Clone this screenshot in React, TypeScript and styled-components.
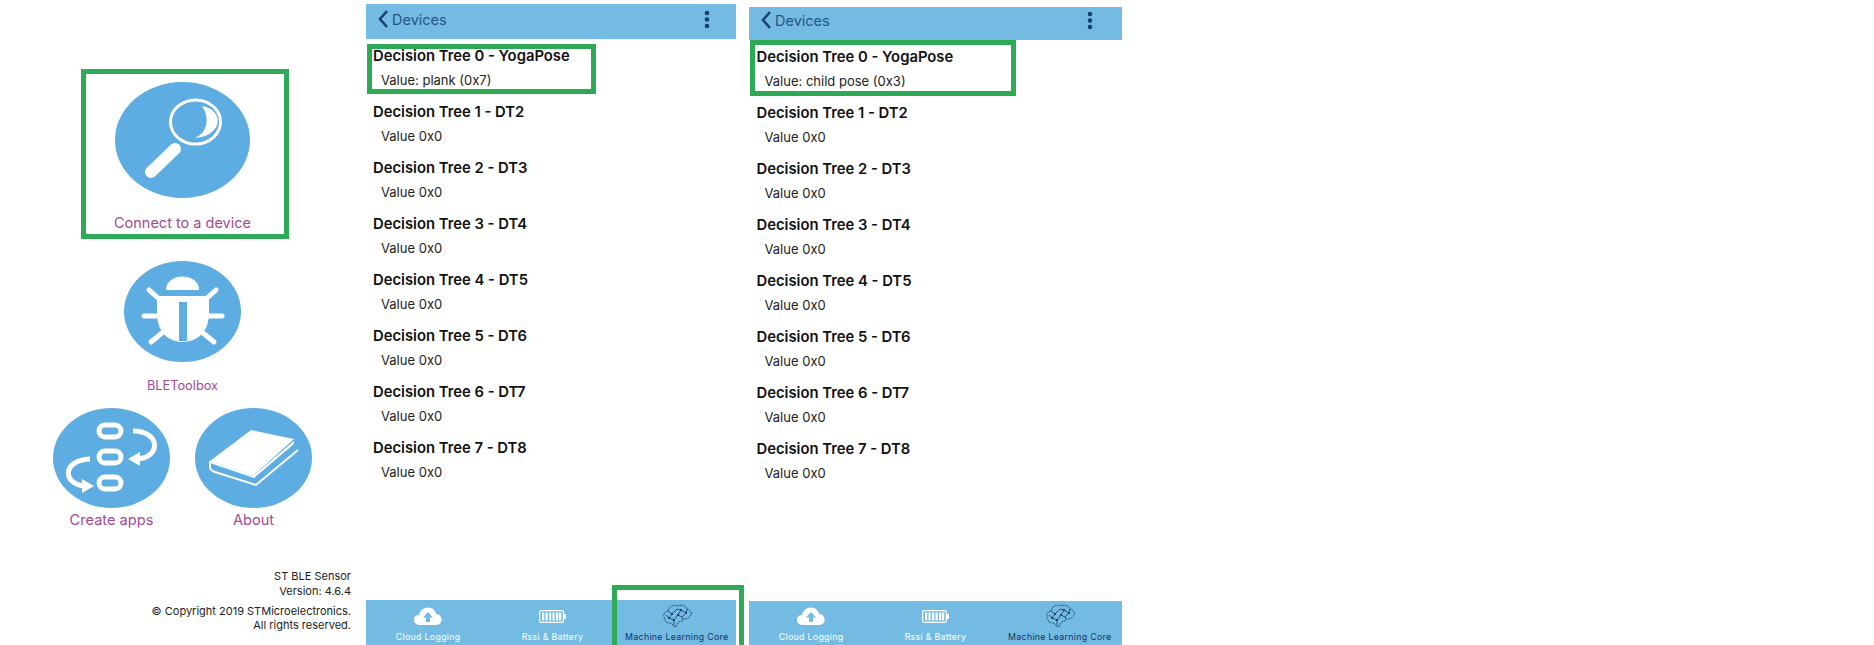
import React from 'react';
import styled, { createGlobalStyle } from 'styled-components';

const GlobalStyle = createGlobalStyle`
  html, body {
    margin: 0;
    padding: 0;
    background: #ffffff;
  }
  body {
    font-family: Inter, "Liberation Sans", sans-serif;
  }
`;

const Page = styled.div`
  width: 1874px;
  height: 645px;
  display: flex;
  overflow: hidden;
`;

const Home = styled.div`
  width: 366px;
  height: 645px;
  display: flex;
  flex-direction: column;
  align-items: center;
  padding: 69px 1px 0 0;
  box-sizing: border-box;
`;

const ConnectBox = styled.div`
  width: 208px;
  height: 170px;
  margin-left: 5px;
  border: 5px solid #2eaa57;
  box-sizing: border-box;
  display: flex;
  flex-direction: column;
  align-items: center;
  padding: 8px 5px 0 0;
`;

const HomeLabel = styled.div<{ $size: number }>`
  color: #a34a8f;
  font-size: ${(p) => p.$size}px;
  line-height: 16px;
  text-align: center;
`;

const ConnectLabel = styled(HomeLabel)`
  margin-top: 17px;
`;

const BugItem = styled.div`
  margin-top: 22px;
  display: flex;
  flex-direction: column;
  align-items: center;
  gap: 16px;
`;

const AppsRow = styled.div`
  margin-top: 14px;
  display: flex;
  gap: 25px;
`;

const AppItem = styled.div`
  display: flex;
  flex-direction: column;
  align-items: center;
  gap: 4px;
`;

const Footer = styled.div`
  align-self: flex-end;
  margin: 41px 14px 0 0;
  color: #222222;
  font-size: 11px;
  text-align: right;
`;

const FooterLine = styled.div<{ $gap?: number }>`
  line-height: 14px;
  margin-bottom: ${(p) => p.$gap ?? 0}px;
`;

const Phone = styled.div<{ $top: number; $width: number; $gap: number }>`
  position: relative;
  width: ${(p) => p.$width}px;
  height: 645px;
  margin-right: ${(p) => p.$gap}px;
  padding-top: ${(p) => p.$top}px;
  box-sizing: border-box;
  display: flex;
  flex-direction: column;
`;

const Header = styled.div<{ $height: number; $lift: number; $right: number }>`
  height: ${(p) => p.$height}px;
  flex-shrink: 0;
  background: #74bbe4;
  display: flex;
  align-items: center;
  justify-content: space-between;
  padding: 0 ${(p) => p.$right}px ${(p) => p.$lift}px 11px;
  box-sizing: border-box;
  color: #245583;
  font-size: 14.5px;
`;

const BackLink = styled.div`
  display: flex;
  align-items: center;
  gap: 3px;
`;

const List = styled.div<{ $indent: number }>`
  flex: 1;
  padding: 6px 0 0 ${(p) => p.$indent}px;
`;

const Row = styled.div`
  height: 56px;
  box-sizing: border-box;
  color: #111111;
`;

const RowTitle = styled.div`
  font-size: 14.8px;
  font-weight: 600;
  line-height: 22px;
`;

const RowValue = styled.div`
  font-size: 13px;
  line-height: 20px;
  margin: 3px 0 0 8px;
  color: #222222;
`;

const RowHighlight = styled.div<{ $width: number; $top: number; $height: number }>`
  position: absolute;
  left: 1px;
  top: ${(p) => p.$top}px;
  width: ${(p) => p.$width}px;
  height: ${(p) => p.$height}px;
  border: 5px solid #2eaa57;
  box-sizing: border-box;
  pointer-events: none;
`;

const TabBar = styled.div<{ $height: number }>`
  height: ${(p) => p.$height}px;
  flex-shrink: 0;
  background: #74bbe4;
  display: grid;
  grid-template-columns: repeat(3, 124.3px);
  overflow: hidden;
`;

const Tab = styled.div<{ $dark?: boolean }>`
  display: flex;
  flex-direction: column;
  align-items: center;
  justify-content: flex-end;
  height: 100%;
  padding-bottom: 2px;
  box-sizing: border-box;
  color: ${(p) => (p.$dark ? '#17335c' : '#ffffff')};
`;

const TabIconSlot = styled.div`
  height: 28px;
  display: flex;
  align-items: center;
  justify-content: center;
`;

const TabLabel = styled.div`
  font-size: 8.8px;
  line-height: 13px;
  letter-spacing: 0.3px;
  white-space: nowrap;
`;

const TabHighlight = styled.div`
  position: absolute;
  left: 246px;
  top: 585px;
  width: 132px;
  height: 66px;
  border: 5px solid #2eaa57;
  box-sizing: border-box;
  pointer-events: none;
`;

const CIRCLE = '#5dade2';
const BAR = '#74bbe4';

function SearchCircle() {
  return (
    <svg width="135" height="116" viewBox="0 0 135 116">
      <ellipse cx="67.5" cy="58" rx="67.5" ry="58" fill={CIRCLE} />
      <ellipse cx="80.5" cy="40" rx="25" ry="22" fill="none" stroke="#fff" strokeWidth="3" />
      <path d="M87 24 C110 28 108 54 80 56 C94 50 94 34 87 24Z" fill="#fff" />
      <path d="M60 67 L36 90" stroke="#fff" strokeWidth="12" strokeLinecap="round" />
    </svg>
  );
}

function BugCircle() {
  return (
    <svg width="117" height="101" viewBox="0 0 117 101">
      <ellipse cx="58.5" cy="50.5" rx="58.5" ry="50.5" fill={CIRCLE} />
      <path d="M42 29 C42 11 75 11 75 29Z" fill="#fff" />
      <path d="M33 35 H85 V52 C85 72 72 81 58.5 81 C45 81 33 72 33 52Z" fill="#fff" />
      <rect x="55" y="41" width="8" height="39" fill={CIRCLE} />
      <g stroke="#fff" strokeWidth="5" strokeLinecap="round">
        <path d="M25 29 L34 37" />
        <path d="M92 29 L83 37" />
        <path d="M20 55 H33" />
        <path d="M85 55 H98" />
        <path d="M27 81 L38 72" />
        <path d="M90 81 L79 72" />
      </g>
    </svg>
  );
}

function AppsCircle() {
  return (
    <svg width="117" height="100" viewBox="0 0 117 100">
      <ellipse cx="58.5" cy="50" rx="58.5" ry="50" fill={CIRCLE} />
      <g fill="none" stroke="#fff" strokeWidth="5">
        <rect x="46" y="17" width="22" height="12" rx="6" />
        <rect x="46" y="43" width="22" height="12" rx="6" />
        <rect x="46" y="69" width="22" height="12" rx="6" />
        <path d="M80 23 C108 23 108 50 84 51" />
        <path d="M37 51 C9 52 9 76 32 78" />
      </g>
      <path d="M75 51 L87 44 L87 58Z" fill="#fff" />
      <path d="M41 78 L29 71 L29 85Z" fill="#fff" />
    </svg>
  );
}

function BookCircle() {
  return (
    <svg width="117" height="100" viewBox="0 0 117 100">
      <ellipse cx="58.5" cy="50" rx="58.5" ry="50" fill={CIRCLE} />
      <path d="M56 22 L99 31 L58 68 L15 53Z" fill="#fff" />
      <path d="M15 53 L15 59 C15 62 17 63 20 64 L61 77 L103 42" fill="none" stroke="#fff" strokeWidth="2" />
      <path d="M15 55 L59 70 L99 36 L99 33 L58 68 L15 53Z" fill="#fff" />
    </svg>
  );
}

function BackChevron() {
  return (
    <svg width="12" height="20" viewBox="0 0 12 20">
      <path d="M10 2 L3 10 L10 18" fill="none" stroke="#17406e" strokeWidth="2.6" />
    </svg>
  );
}

function MoreDots() {
  return (
    <svg width="6" height="19" viewBox="0 0 6 19">
      <circle cx="3" cy="3" r="2.3" fill="#17406e" />
      <circle cx="3" cy="9.5" r="2.3" fill="#17406e" />
      <circle cx="3" cy="16" r="2.3" fill="#17406e" />
    </svg>
  );
}

function CloudIcon() {
  return (
    <svg width="28" height="18" viewBox="0 0 28 18">
      <path d="M6 18 C-2 18 -2 8 5 8 C6 2 12 -1 17 1 C20 2 22 5 22 7 C29 7 30 18 22 18Z" fill="#fff" />
      <path d="M14 5 L19 10.5 H16 V15 H12 V10.5 H9Z" fill={BAR} />
    </svg>
  );
}

function BatteryIcon() {
  return (
    <svg width="27" height="13" viewBox="0 0 27 13">
      <rect x="0.6" y="0.6" width="23.8" height="11.8" rx="1.5" fill="none" stroke="#fff" strokeWidth="1.2" />
      <rect x="25" y="4" width="2" height="5" fill="#fff" />
      {[3, 6.5, 10, 13.5, 17, 20].map((x) => (
        <rect key={x} x={x} y="2.6" width="2.2" height="7.8" fill="#fff" />
      ))}
    </svg>
  );
}

function BrainIcon() {
  return (
    <svg width="30" height="24" viewBox="0 0 30 24" fill="none" stroke="#17335c" strokeWidth="0.8">
      <path d="M3 15 C0 11 3 7 6 7 C7 2 12 0 15 2 C20 0 24 2 25 5 C29 6 31 10 28 12 C27 15 23 15 21 15 C20 18 19 18 18 17 C16 19 15 20 14 23 L11 22 C11 20 9 19 7 19 C4 19 3 17 3 15Z" strokeDasharray="2 0.8" />
      <path d="M6 7 L10 10 L7 14 L12 16 L16 11 L20 13 L24 9 L19 6 L16 11 M10 10 L15 5 L19 6 M12 16 L12 21 M24 9 L25 5 M20 13 L21 15 M4 11 L7 14" />
      <g fill="#17335c" stroke="none">
        <circle cx="10" cy="10" r="1" />
        <circle cx="16" cy="11" r="1" />
        <circle cx="19" cy="6" r="1" />
        <circle cx="24" cy="9" r="1" />
        <circle cx="12" cy="16" r="1" />
        <circle cx="7" cy="14" r="1" />
      </g>
    </svg>
  );
}

const trees = ['DT2', 'DT3', 'DT4', 'DT5', 'DT6', 'DT7', 'DT8'];

interface DevicePanelProps {
  value: string;
  top: number;
  width: number;
  gap: number;
  headerHeight: number;
  headerLift: number;
  headerRight: number;
  indent: number;
  tabHeight: number;
  highlight: { width: number; top: number; height: number };
  tabHighlight?: boolean;
}

function DevicePanel(props: DevicePanelProps) {
  const { value, top, width, gap, headerHeight, headerLift, headerRight, indent, tabHeight, highlight, tabHighlight } = props;
  return (
    <Phone $top={top} $width={width} $gap={gap}>
      <Header $height={headerHeight} $lift={headerLift} $right={headerRight}>
        <BackLink>
          <BackChevron />
          Devices
        </BackLink>
        <MoreDots />
      </Header>
      <List $indent={indent}>
        <Row>
          <RowTitle>Decision Tree 0 - YogaPose</RowTitle>
          <RowValue>Value: {value}</RowValue>
        </Row>
        {trees.map((name, i) => (
          <Row key={name}>
            <RowTitle>
              Decision Tree {i + 1} - {name}
            </RowTitle>
            <RowValue>Value 0x0</RowValue>
          </Row>
        ))}
      </List>
      <TabBar $height={tabHeight}>
        <Tab>
          <TabIconSlot>
            <CloudIcon />
          </TabIconSlot>
          <TabLabel>Cloud Logging</TabLabel>
        </Tab>
        <Tab>
          <TabIconSlot>
            <BatteryIcon />
          </TabIconSlot>
          <TabLabel>Rssi &amp; Battery</TabLabel>
        </Tab>
        <Tab $dark>
          <TabIconSlot>
            <BrainIcon />
          </TabIconSlot>
          <TabLabel>Machine Learning Core</TabLabel>
        </Tab>
      </TabBar>
      <RowHighlight $width={highlight.width} $top={highlight.top} $height={highlight.height} />
      {tabHighlight && <TabHighlight />}
    </Phone>
  );
}

export default function App() {
  return (
    <Page>
      <GlobalStyle />
      <Home>
        <ConnectBox>
          <SearchCircle />
          <ConnectLabel $size={14.5}>Connect to a device</ConnectLabel>
        </ConnectBox>
        <BugItem>
          <BugCircle />
          <HomeLabel $size={12.8}>BLEToolbox</HomeLabel>
        </BugItem>
        <AppsRow>
          <AppItem>
            <AppsCircle />
            <HomeLabel $size={14.6}>Create apps</HomeLabel>
          </AppItem>
          <AppItem>
            <BookCircle />
            <HomeLabel $size={14.6}>About</HomeLabel>
          </AppItem>
        </AppsRow>
        <Footer>
          <FooterLine $gap={1}>ST BLE Sensor</FooterLine>
          <FooterLine $gap={6}>Version: 4.6.4</FooterLine>
          <FooterLine>© Copyright 2019 STMicroelectronics.</FooterLine>
          <FooterLine>All rights reserved.</FooterLine>
        </Footer>
      </Home>
      <DevicePanel
        value="plank (0x7)"
        top={4}
        width={370}
        gap={13}
        headerHeight={35}
        headerLift={5}
        headerRight={26}
        indent={7}
        tabHeight={45}
        highlight={{ width: 229, top: 44, height: 50 }}
        tabHighlight
      />
      <DevicePanel
        value="child pose (0x3)"
        top={7}
        width={373}
        gap={0}
        headerHeight={33}
        headerLift={7}
        headerRight={29}
        indent={7.5}
        tabHeight={44}
        highlight={{ width: 266, top: 40, height: 56 }}
      />
    </Page>
  );
}
